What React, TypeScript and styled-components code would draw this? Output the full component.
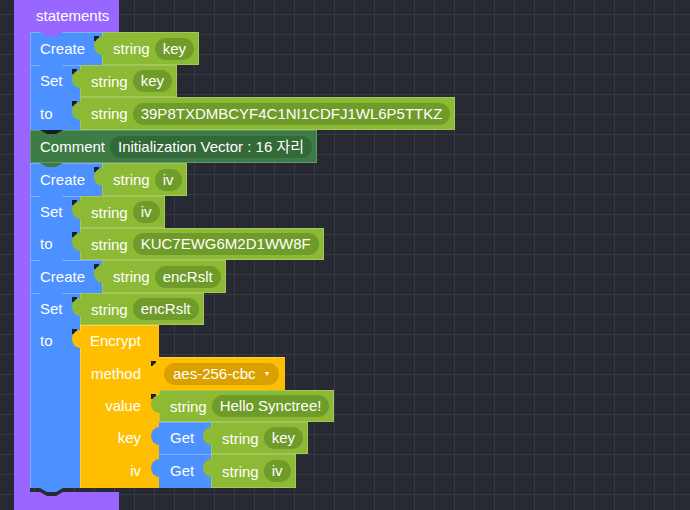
import React from 'react';
import styled, { createGlobalStyle, css } from 'styled-components';

const C = {
  bg: '#282a33',
  grid: '#373943',
  purple: '#9966ff',
  blue: '#4c91ff',
  green: '#8cba35',
  greenPill: '#6e9b29',
  comment: '#3e7c46',
  commentPill: '#336839',
  yellow: '#ffbf00',
  yellowPill: '#d9a000',
  socket: '#1c1d23',
  hi: 'rgba(255,255,255,0.28)',
};

const Global = createGlobalStyle`
  html, body { margin: 0; padding: 0; background: ${C.bg}; }
  #root { width: 690px; height: 510px; }
`;

const Canvas = styled.div`
  width: 690px;
  height: 510px;
  overflow: hidden;
  box-sizing: border-box;
  padding-left: 14px;
  display: flex;
  background-color: ${C.bg};
  background-image: linear-gradient(to right, ${C.grid} 1px, transparent 1px),
    linear-gradient(to bottom, ${C.grid} 1px, transparent 1px);
  background-size: 20px 20px;
  background-position: 14px 14px;
  font: 15px "Liberation Sans", Arial, "Noto Sans CJK KR", sans-serif;
  color: #fff;
`;

const trapezoid = css`
  content: '';
  position: absolute;
  width: 23px;
  height: 4px;
  clip-path: polygon(0 0, 100% 0, 70% 100%, 30% 100%);
`;

const tabBelow = (c: string, left: number) => css`
  &::after {
    ${trapezoid}
    left: ${left}px;
    bottom: -4px;
    background: ${c};
    z-index: 3;
  }
`;

const tabLeft = (c: string, sock = true) => css`
  &::before {
    content: '';
    position: absolute;
    left: -8px;
    top: 4px;
    width: 5px;
    height: 5px;
    background: ${C.socket};
    display: ${sock ? 'block' : 'none'};
  }
  &::after {
    content: '';
    position: absolute;
    left: -8px;
    top: 5px;
    width: 9px;
    height: 18px;
    background: ${c};
    border-radius: 8px 0 0 8px / 9px 0 0 9px;
    z-index: 1;
  }
`;

const CBlock = styled.div`
  display: flex;
  flex-direction: column;
  height: 100%;
`;

const CHeader = styled.div`
  position: relative;
  width: 105px;
  height: 32px;
  box-sizing: border-box;
  padding-left: 22px;
  line-height: 32px;
  background: ${C.purple};
  ${tabBelow(C.purple, 26)}
`;

const CBody = styled.div`
  display: flex;
  flex: none;
`;

const CArm = styled.div`
  width: 16px;
  flex: none;
  background: ${C.purple};
`;

const Stack = styled.div`
  display: flex;
  flex-direction: column;
  align-items: flex-start;
  padding-bottom: 4px;
`;

const CFooter = styled.div`
  position: relative;
  width: 105px;
  flex: 1;
  background: ${C.purple};
  &::before {
    ${trapezoid}
    left: 26px;
    top: 0;
    background: ${C.bg};
  }
`;

const Block = styled.div<{ $c: string }>`
  position: relative;
  display: flex;
  flex-direction: column;
  align-items: flex-start;
  ${p => tabBelow(p.$c, 10)}
`;

const Row = styled.div<{ $h?: number }>`
  display: flex;
  align-items: stretch;
  ${p => (p.$h ? `height: ${p.$h}px;` : '')}
`;

const Label = styled.div<{ $w: number; $c: string; $lh: number; $right?: boolean; $top?: boolean }>`
  flex: none;
  box-sizing: border-box;
  width: ${p => p.$w}px;
  background: ${p => p.$c};
  line-height: ${p => p.$lh}px;
  padding: ${p => (p.$right ? '0 18px 0 0' : '0 0 0 10px')};
  text-align: ${p => (p.$right ? 'right' : 'left')};
  white-space: nowrap;
  box-shadow: ${p => (p.$top ? `inset 1px 1px 0 ${C.hi}` : `inset 1px 0 0 ${C.hi}`)};
`;

const Str = styled.div<{ $sock?: boolean }>`
  position: relative;
  flex: none;
  display: flex;
  align-items: center;
  gap: 5px;
  padding: 0 5px 0 11px;
  background: ${C.green};
  box-shadow: inset 0 0 0 1px rgba(255, 255, 255, 0.2);
  white-space: nowrap;
  ${p => tabLeft(C.green, p.$sock !== false)}
`;

const Pill = styled.span<{ $bg: string }>`
  display: inline-block;
  height: 22px;
  line-height: 22px;
  border-radius: 11px;
  padding: 0 8px;
  background: ${p => p.$bg};
  white-space: nowrap;
`;

const CommentBody = styled.div`
  display: flex;
  align-items: center;
  gap: 5px;
  height: 33px;
  box-sizing: border-box;
  padding: 0 5px 0 10px;
  background: ${C.comment};
  box-shadow: inset 0 0 0 1px rgba(255, 255, 255, 0.2);
  white-space: nowrap;
`;

const Encrypt = styled.div`
  position: relative;
  display: flex;
  flex-direction: column;
  align-items: flex-start;
  ${tabLeft(C.yellow)}
`;

const GetBlock = styled.div`
  position: relative;
  display: flex;
  background: ${C.blue};
  box-shadow: inset 0 1px 0 ${C.hi};
  ${tabLeft(C.blue, false)}
`;

const GetLabel = styled.div<{ $lh: number }>`
  width: 52px;
  flex: none;
  box-sizing: border-box;
  padding-left: 11px;
  line-height: ${p => p.$lh}px;
`;

const Dropdown = styled.div`
  position: relative;
  display: flex;
  align-items: center;
  padding: 0 6px 0 5px;
  background: ${C.yellow};
  box-shadow: inset 0 1px 0 rgba(255, 255, 255, 0.3);
  ${tabLeft(C.yellow)}
`;

const DropPill = styled.span`
  display: inline-flex;
  align-items: center;
  width: 115px;
  box-sizing: border-box;
  height: 22px;
  line-height: 22px;
  border-radius: 11px;
  padding: 0 0 0 9px;
  background: ${C.yellowPill};
  white-space: nowrap;
`;

const Arrow = styled.span`
  margin-left: 8px;
  font-size: 7px;
  line-height: 22px;
`;

const StringValue = ({ v, sock }: { v: string; sock?: boolean }) => (
  <Str $sock={sock}>
    string
    <Pill $bg={C.greenPill}>{v}</Pill>
  </Str>
);

const Create = ({ v }: { v: string }) => (
  <Block $c={C.blue}>
    <Row $h={33}>
      <Label $w={72} $c={C.blue} $lh={33} $top>
        Create
      </Label>
      <StringValue v={v} />
    </Row>
  </Block>
);

const SetTo = ({
  name,
  h1,
  h2,
  tab = C.blue,
  children,
}: {
  name: string;
  h1: number;
  h2?: number;
  tab?: string;
  children: React.ReactNode;
}) => (
  <Block $c={tab}>
    <Row $h={h1}>
      <Label $w={50} $c={C.blue} $lh={h1} $top>
        Set
      </Label>
      <StringValue v={name} />
    </Row>
    <Row $h={h2}>
      <Label $w={50} $c={C.blue} $lh={h2 ?? 32}>
        to
      </Label>
      {children}
    </Row>
  </Block>
);

const encRows: { label: string; h: number; node: React.ReactNode }[] = [
  {
    label: 'method',
    h: 33,
    node: (
      <Dropdown>
        <DropPill>
          aes-256-cbc<Arrow>▼</Arrow>
        </DropPill>
      </Dropdown>
    ),
  },
  { label: 'value', h: 32, node: <StringValue v="Hello Synctree!" /> },
  {
    label: 'key',
    h: 32,
    node: (
      <GetBlock>
        <GetLabel $lh={32}>Get</GetLabel>
        <StringValue v="key" sock={false} />
      </GetBlock>
    ),
  },
  {
    label: 'iv',
    h: 34,
    node: (
      <GetBlock>
        <GetLabel $lh={34}>Get</GetLabel>
        <StringValue v="iv" sock={false} />
      </GetBlock>
    ),
  },
];

export default function App() {
  return (
    <>
      <Global />
      <Canvas>
        <CBlock>
          <CHeader>statements</CHeader>
          <CBody>
            <CArm />
            <Stack>
              <Create v="key" />
              <SetTo name="key" h1={32} h2={33} tab={C.socket}>
                <StringValue v="39P8TXDMBCYF4C1NI1CDFJ1WL6P5TTKZ" />
              </SetTo>
              <Block $c={C.comment}>
                <CommentBody>
                  Comment
                  <Pill $bg={C.commentPill}>Initialization Vector : 16 자리</Pill>
                </CommentBody>
              </Block>
              <Create v="iv" />
              <SetTo name="iv" h1={32} h2={32}>
                <StringValue v="KUC7EWG6M2D1WW8F" />
              </SetTo>
              <Create v="encRslt" />
              <SetTo name="encRslt" h1={32}>
                <Encrypt>
                  <Row $h={32}>
                    <Label $w={79} $c={C.yellow} $lh={32} $top>
                      Encrypt
                    </Label>
                  </Row>
                  {encRows.map(r => (
                    <Row key={r.label} $h={r.h}>
                      <Label $w={79} $c={C.yellow} $lh={r.h} $right>
                        {r.label}
                      </Label>
                      {r.node}
                    </Row>
                  ))}
                </Encrypt>
              </SetTo>
            </Stack>
          </CBody>
          <CFooter />
        </CBlock>
      </Canvas>
    </>
  );
}
